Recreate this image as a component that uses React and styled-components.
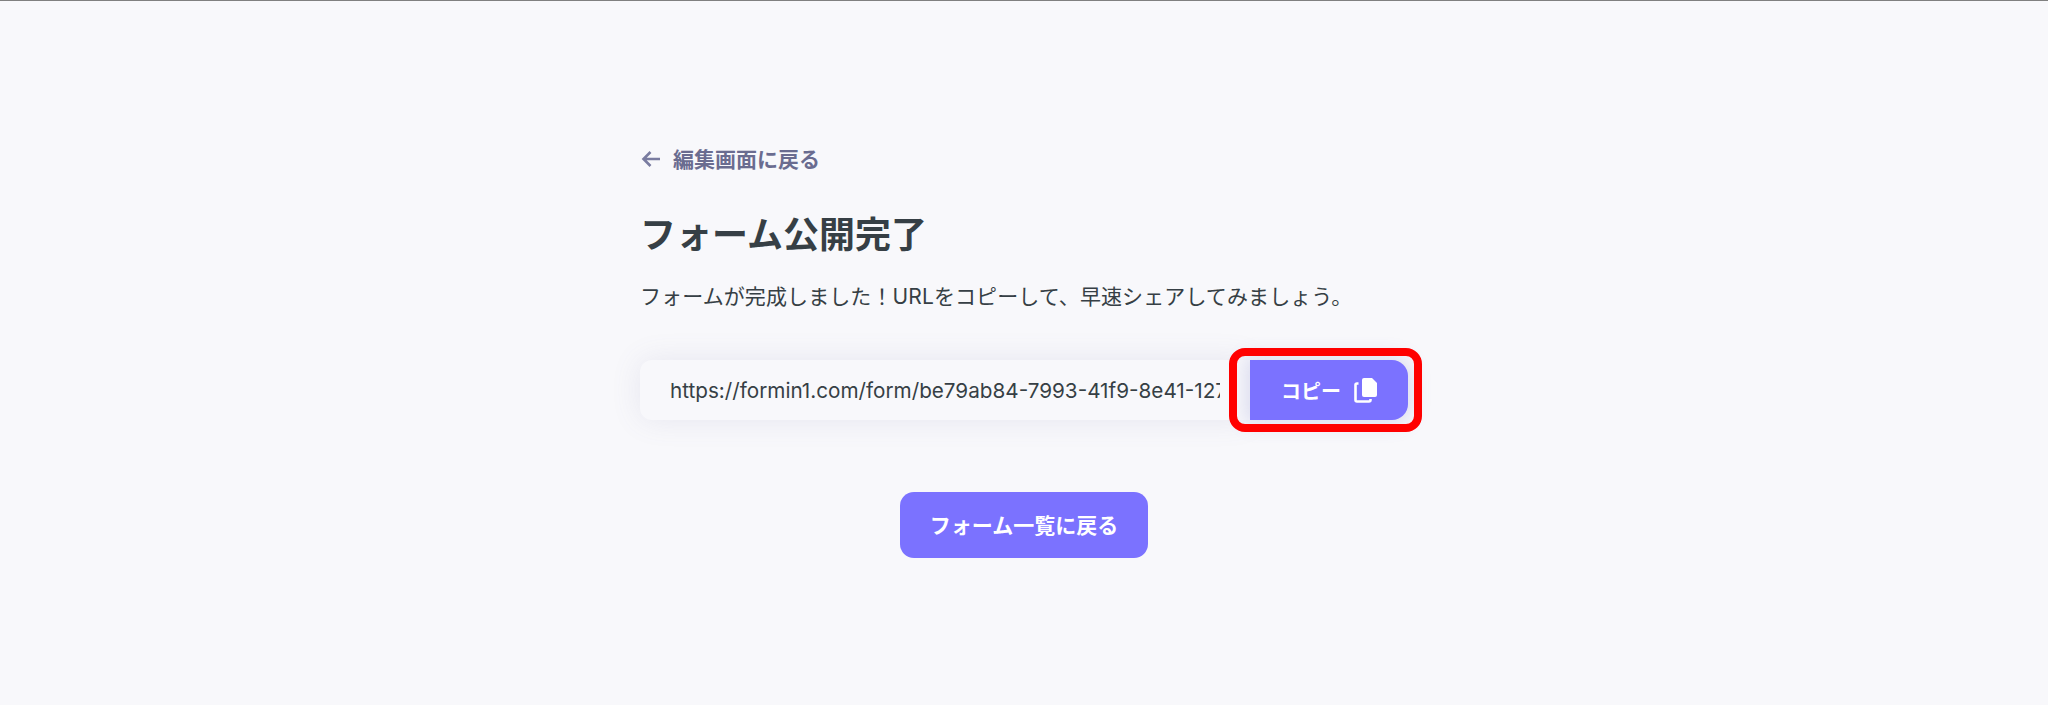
import React from 'react';
import styled, { createGlobalStyle } from 'styled-components';

const Global = createGlobalStyle`
  html, body {
    margin: 0;
    padding: 0;
    background-color: #f8f8fb;
  }
  body {
    font-family: Inter, "Noto Sans CJK JP", sans-serif;
    color: #363f45;
  }
`

const Page = styled.main`
  height: 704px;
  border-top: 1px solid #808080;
  display: flex;
  justify-content: center;
  overflow: hidden;
`
const Content = styled.div`
  width: 768px;
  padding-top: 139px;
`
const BackLink = styled.a`
  display: flex;
  align-items: center;
  gap: 12px;
  height: 36px;
  padding-left: 1px;
  color: #6a6c90;
  font-size: 21px;
  font-weight: 700;
  svg {
    margin-top: 2px;
  }
`
const Title = styled.h1`
  margin: 32px 0 0;
  font-size: 36px;
  line-height: 54px;
  font-weight: 700;
  color: #363f45;
`
const Lead = styled.p`
  margin: 20px 0 0;
  font-size: 21px;
  letter-spacing: 0.1px;
  line-height: 30px;
`
const UrlRow = styled.div`
  display: flex;
  margin-top: 48px;
  height: 60px;
`
const UrlField = styled.div`
  flex: 1;
  min-width: 0;
  display: flex;
  align-items: center;
  padding: 0 30px;
  border-radius: 12px 0 0 12px;
  background-color: #f8f8fb;
  box-shadow: 0 0 30px rgba(106, 108, 160, 0.12);
`
const UrlText = styled.span`
  display: block;
  flex: 1;
  min-width: 0;
  padding-top: 1px;
  font-size: 20.7px;
  line-height: 30px;
  overflow: hidden;
  white-space: nowrap;
`
const CopyButton = styled.button`
  position: relative;
  width: 158px;
  flex: none;
  border: 0;
  padding: 0 0 0 1px;
  display: flex;
  align-items: center;
  justify-content: center;
  gap: 13px;
  color: #fff;
  font: 600 20px Inter, "Noto Sans CJK JP", sans-serif;
  background-color: #7b72ff;
  border-radius: 0 16px 16px 0;
  box-shadow: 0 0 20px 4px rgba(100, 105, 190, 0.2);
`
const Highlight = styled.span`
  position: absolute;
  top: -12px;
  bottom: -12px;
  left: -21px;
  right: -14px;
  border: 8px solid #ff0000;
  border-radius: 16px;
`
const Footer = styled.div`
  display: flex;
  justify-content: center;
  margin-top: 72px;
`
const PrimaryButton = styled.button`
  width: 248px;
  height: 66px;
  border: 0;
  padding: 0 0 2px;
  border-radius: 14px;
  color: #fff;
  font: 700 21px Inter, "Noto Sans CJK JP", sans-serif;
  background-color: #7b72ff;
`

const ArrowLeft = () => (
  <svg width="20" height="20" viewBox="0 0 20 20" fill="none" stroke="#7a7ca0" strokeWidth="2.6">
    <path d="M19 10H2.5M9.5 3L2.5 10L9.5 17" />
  </svg>
)

const CopyIcon = () => (
  <svg width="24" height="26" viewBox="0 0 24 26" fill="none">
    <path d="M10 1h8l5 5v12a2 2 0 0 1-2 2H10a2 2 0 0 1-2-2V3a2 2 0 0 1 2-2z" fill="#fff" />
    <path d="M4.5 6.5H3a1.5 1.5 0 0 0-1.5 1.5v15a1.5 1.5 0 0 0 1.5 1.5h12a1.5 1.5 0 0 0 1.5-1.5v-1" stroke="#fff" strokeWidth="2.6" />
  </svg>
)

export default function App() {
  return (
    <Page>
      <Global />
      <Content>
        <BackLink>
          <ArrowLeft />
          編集画面に戻る
        </BackLink>
        <Title>フォーム公開完了</Title>
        <Lead>フォームが完成しました！URLをコピーして、早速シェアしてみましょう。</Lead>
        <UrlRow>
          <UrlField>
            <UrlText>https://formin1.com/form/be79ab84-7993-41f9-8e41-127a3c5d9e10</UrlText>
          </UrlField>
          <CopyButton>
            コピー
            <CopyIcon />
            <Highlight />
          </CopyButton>
        </UrlRow>
        <Footer>
          <PrimaryButton>フォーム一覧に戻る</PrimaryButton>
        </Footer>
      </Content>
    </Page>
  );
}
